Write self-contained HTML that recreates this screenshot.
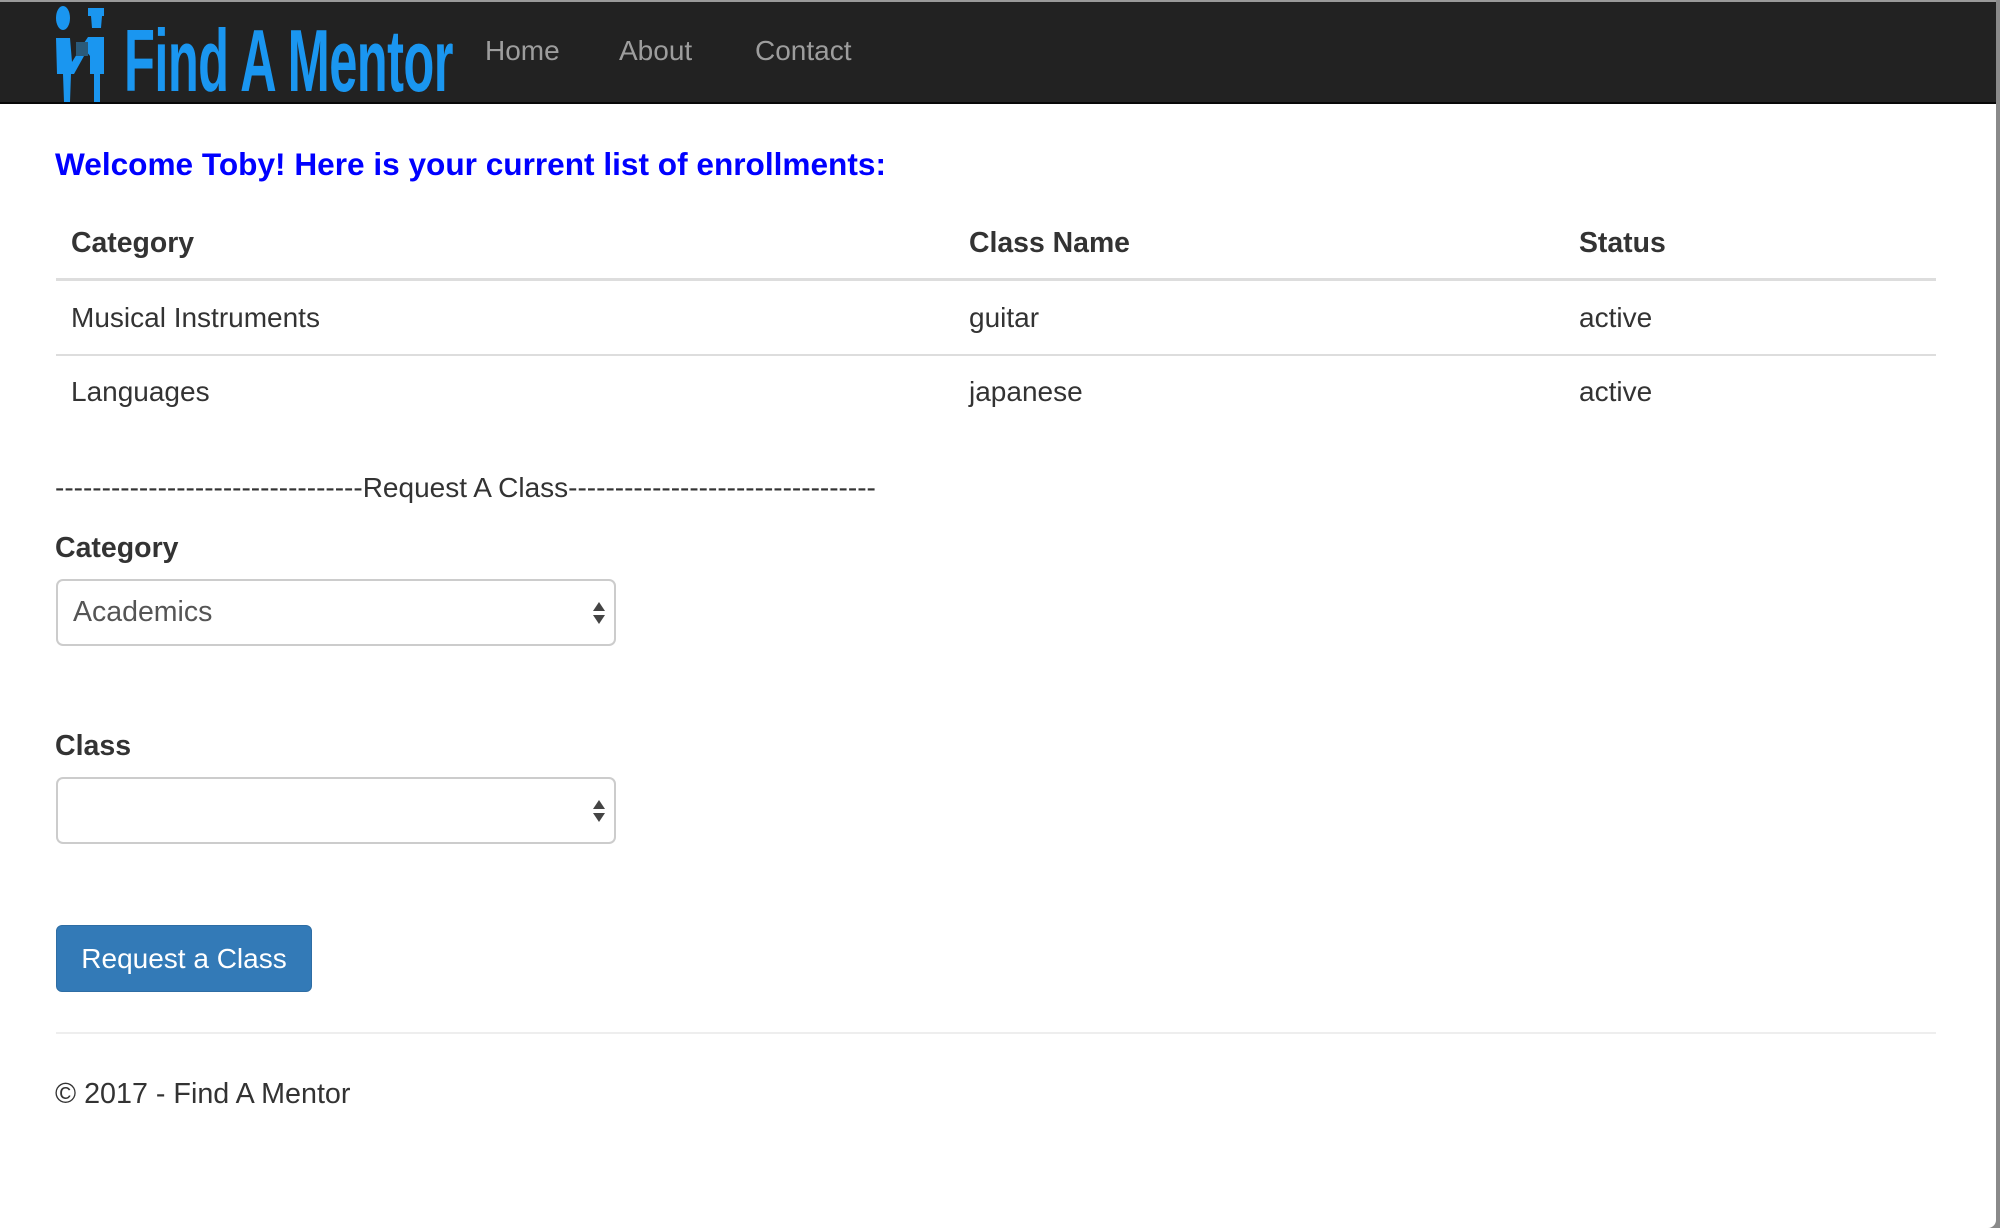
<!DOCTYPE html>
<html><head><meta charset="utf-8"><style>
*{box-sizing:border-box}
body{margin:0;width:2000px;height:1228px;background:#8a8a8a;font-family:"Liberation Sans",Arial,sans-serif;color:#333;overflow:hidden;position:relative}
#page{position:absolute;left:0;top:0;width:1996px;height:1228px;background:#fff;border-bottom-right-radius:8px}
#nav{position:absolute;left:0;top:0;width:1996px;height:104px;background:#222;border-top:2px solid #9a9a9a;border-bottom:2px solid #080808}
.logo{position:absolute;left:124px;top:8px;font-size:88px;color:#1a96f0;white-space:nowrap;transform:scaleX(0.575);transform-origin:left top;font-weight:bold;letter-spacing:-1px}
.nl{position:absolute;top:33px;font-size:28px;color:#9d9d9d}
.abs{position:absolute;white-space:nowrap}
h1{position:absolute;left:55px;top:146px;margin:0;font-size:31.6px;color:#0000ff;font-weight:bold;white-space:nowrap}
.th{font-weight:bold;font-size:28.4px;color:#333}
.td{font-size:28px;color:#333}
.line{position:absolute;left:56px;width:1880px;background:#ddd}
.sel{position:absolute;left:56px;width:560px;height:67px;border:2px solid #ccc;border-radius:7px;background:#fff;font-size:28.5px;color:#555;padding:15px 0 0 15px}
.arr{position:absolute;right:9px;top:21px;width:0;height:0;border-left:6px solid transparent;border-right:6px solid transparent}
.lbl{font-weight:bold;font-size:28.5px;color:#333}
.btn{position:absolute;left:56px;top:925px;width:256px;height:67px;background:#337ab7;border:1px solid #2e6da4;border-radius:6px;color:#fff;font-size:28px;text-align:center;line-height:65px}
</style></head><body>
<div id="page">
<div id="nav">
<svg style="position:absolute;left:54px;top:2px" width="54" height="100" viewBox="0 0 54 100">
<ellipse cx="9" cy="14" rx="7" ry="12" fill="#1a96f0"/>
<path d="M2 34 L16 34 L18 58 L26 45 L30 52 L20 70 L17 70 L16 98 L10 98 L9 70 L3 70 Z" fill="#1a96f0"/>
<rect x="34" y="4" width="16" height="8" fill="#1a96f0"/>
<path d="M37 12 L48 12 L47 24 L38 24 Z" fill="#1a96f0"/>
<path d="M34 33 L50 33 L50 70 L46 70 L46 98 L40 98 L40 70 L36 70 L36 52 L28 42 Z" fill="#1a96f0"/>
<rect x="22" y="38" width="12" height="14" fill="#2a5a7a"/>
</svg>
<div class="logo">Find A Mentor</div>
<div class="nl" style="left:485px">Home</div>
<div class="nl" style="left:619px">About</div>
<div class="nl" style="left:755px">Contact</div>
</div>
<h1>Welcome Toby! Here is your current list of enrollments:</h1>
<div class="abs th" style="left:71px;top:227px">Category</div>
<div class="abs th" style="left:969px;top:227px">Class Name</div>
<div class="abs th" style="left:1579px;top:227px">Status</div>
<div class="line" style="top:278px;height:3px"></div>
<div class="abs td" style="left:71px;top:302px">Musical Instruments</div>
<div class="abs td" style="left:969px;top:302px">guitar</div>
<div class="abs td" style="left:1579px;top:302px">active</div>
<div class="line" style="top:354px;height:2px"></div>
<div class="abs td" style="left:71px;top:376px">Languages</div>
<div class="abs td" style="left:969px;top:376px">japanese</div>
<div class="abs td" style="left:1579px;top:376px">active</div>
<div class="abs td" style="left:55px;top:472px">---------------------------------Request A Class---------------------------------</div>
<div class="abs lbl" style="left:55px;top:532px">Category</div>
<div class="sel" style="top:579px">Academics<div class="arr" style="border-bottom:9px solid #444"></div><div class="arr" style="top:34px;border-top:9px solid #444"></div></div>
<div class="abs lbl" style="left:55px;top:730px">Class</div>
<div class="sel" style="top:777px"><div class="arr" style="border-bottom:9px solid #444"></div><div class="arr" style="top:34px;border-top:9px solid #444"></div></div>
<div class="btn">Request a Class</div>
<div class="line" style="top:1032px;height:2px;background:#eee"></div>
<div class="abs td" style="left:55px;top:1078px;font-size:28.7px">© 2017 - Find A Mentor</div>
</div>
</body></html>
